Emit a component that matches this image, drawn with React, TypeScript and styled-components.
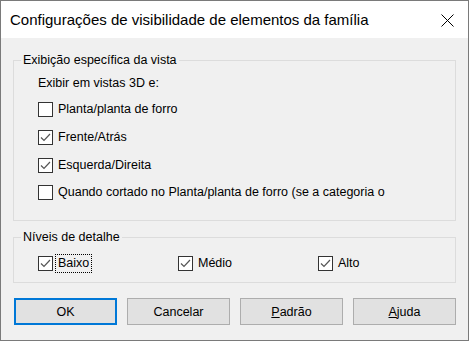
import styled, { createGlobalStyle } from "styled-components";

const GlobalStyle = createGlobalStyle`
  html, body {
    margin: 0;
    padding: 0;
    background: #f0f0f0;
  }
  * {
    box-sizing: border-box;
  }
`;

const Window = styled.div`
  width: 469px;
  height: 341px;
  border: 1px solid #7a7a7a;
  background: #f0f0f0;
  font-family: "Segoe UI", "Liberation Sans", Arial, sans-serif;
  font-size: 12.5px;
  color: #000;
  display: flex;
  flex-direction: column;
  overflow: hidden;
`;

const TitleBar = styled.div`
  height: 37px;
  flex-shrink: 0;
  background: #fff;
  display: flex;
  align-items: center;
  justify-content: space-between;
  padding: 0 14px 0 9px;
`;

const Title = styled.span`
  font-size: 15px;
  line-height: 20px;
  margin-top: 1px;
`;

const CloseIcon = styled.svg`
  width: 13px;
  height: 13px;
  margin-top: 2px;
`;

const Body = styled.div`
  flex: 1;
  padding: 15px 12px 0 12px;
  display: flex;
  flex-direction: column;
`;

const GroupBox = styled.fieldset<{ $gap?: number }>`
  margin: ${({ $gap }) => $gap ?? 0}px 0 0 0;
  border: 1px solid #dcdcdc;
  padding: 0;
  min-width: 0;
`;

const Legend = styled.legend`
  margin-left: 7px;
  padding: 0 2px;
  line-height: 15px;
`;

const GroupContent = styled.div<{ $pad: string }>`
  padding: ${({ $pad }) => $pad};
`;

const Caption = styled.div`
  line-height: 15px;
  height: 15px;
  margin-bottom: 4px;
`;

const Row = styled.label<{ $h?: number }>`
  display: flex;
  align-items: center;
  height: ${({ $h }) => $h ?? 28}px;
  gap: 5px;
`;

const TopRow = styled(Row)`
  align-items: flex-start;
  padding-top: 6px;
`;

const Box = styled.span`
  width: 15px;
  height: 15px;
  flex-shrink: 0;
  border: 1px solid #333;
  background: #fff;
  display: flex;
  align-items: center;
  justify-content: center;
`;

const Text = styled.span<{ $focus?: boolean }>`
  line-height: 15px;
  padding: 0 1px;
  margin-left: -1px;
  outline: ${({ $focus }) => ($focus ? "1px dotted #000" : "none")};
  outline-offset: 1px;
`;

// the second line of this label is cut by the control, as in the dialog
const ClippedText = styled.span`
  line-height: 15px;
  height: 17px;
  overflow: hidden;
  width: 350px;
`;

const Levels = styled.div`
  display: grid;
  grid-template-columns: 140px 140px 1fr;
`;

const ButtonRow = styled.div`
  display: flex;
  justify-content: space-between;
  margin-top: 15px;
  padding-left: 1px;
`;

const Button = styled.button<{ $default?: boolean }>`
  width: 103px;
  height: 27px;
  font-family: inherit;
  font-size: 12.5px;
  color: #000;
  background: #e1e1e1;
  border: ${({ $default }) => ($default ? "2px solid #0078d7" : "1px solid #adadad")};
  padding: 0;
`;

function CheckBox({ checked }: { checked?: boolean }) {
  return (
    <Box>
      {checked && (
        <svg width="11" height="9" viewBox="0 0 11 9">
          <path d="M1 4.5 L4 7.5 L10 1" fill="none" stroke="#555" strokeWidth="1.2" />
        </svg>
      )}
    </Box>
  );
}

export default function App() {
  return (
    <>
      <GlobalStyle />
      <Window>
        <TitleBar>
          <Title>Configurações de visibilidade de elementos da família</Title>
          <CloseIcon viewBox="0 0 13 13">
            <path d="M0.5 0.5 L12.5 12.5 M12.5 0.5 L0.5 12.5" stroke="#000" strokeWidth="1" />
          </CloseIcon>
        </TitleBar>
        <Body>
          <GroupBox>
            <Legend>Exibição específica da vista</Legend>
            <GroupContent $pad="8px 0 13px 24px">
              <Caption>Exibir em vistas 3D e:</Caption>
              <Row>
                <CheckBox />
                <Text>Planta/planta de forro</Text>
              </Row>
              <Row>
                <CheckBox checked />
                <Text>Frente/Atrás</Text>
              </Row>
              <Row>
                <CheckBox checked />
                <Text>Esquerda/Direita</Text>
              </Row>
              <TopRow>
                <CheckBox />
                <ClippedText>
                  Quando cortado no Planta/planta de forro (se a categoria o permitir)
                </ClippedText>
              </TopRow>
            </GroupContent>
          </GroupBox>
          <GroupBox $gap={9}>
            <Legend>Níveis de detalhe</Legend>
            <GroupContent $pad="8px 0 9px 24px">
              <Levels>
                <Row $h={20}>
                  <CheckBox checked />
                  <Text $focus>Baixo</Text>
                </Row>
                <Row $h={20}>
                  <CheckBox checked />
                  <Text>Médio</Text>
                </Row>
                <Row $h={20}>
                  <CheckBox checked />
                  <Text>Alto</Text>
                </Row>
              </Levels>
            </GroupContent>
          </GroupBox>
          <ButtonRow>
            <Button $default>OK</Button>
            <Button>Cancelar</Button>
            <Button>
              <u>P</u>adrão
            </Button>
            <Button>
              <u>A</u>juda
            </Button>
          </ButtonRow>
        </Body>
      </Window>
    </>
  );
}
